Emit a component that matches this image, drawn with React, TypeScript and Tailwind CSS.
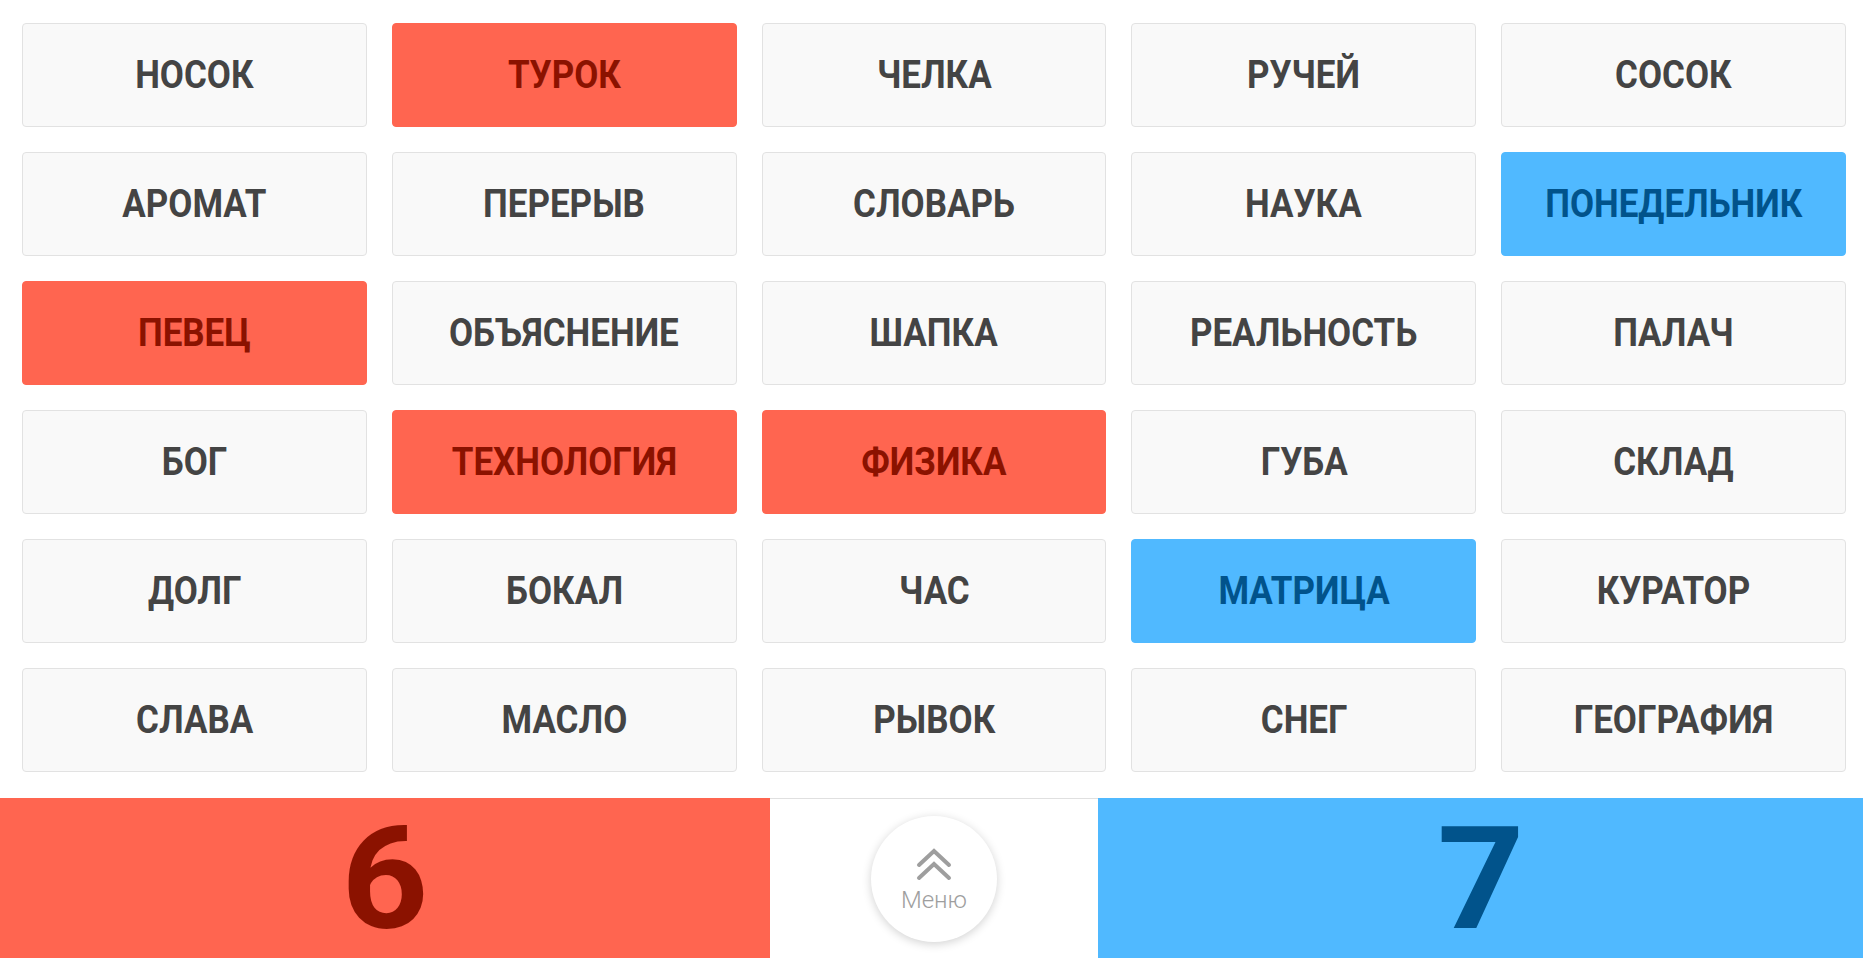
import { clsx } from "clsx";

type Tone = "red" | "blue" | undefined;

const rows: [string, Tone][][] = [
  [["НОСОК", undefined], ["ТУРОК", "red"], ["ЧЕЛКА", undefined], ["РУЧЕЙ", undefined], ["СОСОК", undefined]],
  [["АРОМАТ", undefined], ["ПЕРЕРЫВ", undefined], ["СЛОВАРЬ", undefined], ["НАУКА", undefined], ["ПОНЕДЕЛЬНИК", "blue"]],
  [["ПЕВЕЦ", "red"], ["ОБЪЯСНЕНИЕ", undefined], ["ШАПКА", undefined], ["РЕАЛЬНОСТЬ", undefined], ["ПАЛАЧ", undefined]],
  [["БОГ", undefined], ["ТЕХНОЛОГИЯ", "red"], ["ФИЗИКА", "red"], ["ГУБА", undefined], ["СКЛАД", undefined]],
  [["ДОЛГ", undefined], ["БОКАЛ", undefined], ["ЧАС", undefined], ["МАТРИЦА", "blue"], ["КУРАТОР", undefined]],
  [["СЛАВА", undefined], ["МАСЛО", undefined], ["РЫВОК", undefined], ["СНЕГ", undefined], ["ГЕОГРАФИЯ", undefined]],
];

/** одна карточка со словом */
function WordCard({ word, tone }: { word: string; tone?: Tone }) {
  return (
    <div
      className={clsx(
        "h-[104px] rounded-[4px] border flex items-center justify-center",
        tone === "red" && "bg-[#ff6550] border-[#ff6550] text-[#8b1200]",
        tone === "blue" && "bg-[#50b9ff] border-[#50b9ff] text-[#01538b]",
        !tone && "bg-[#f9f9f9] border-[#e2e2e2] text-[#444444]",
      )}
    >
      <span className="inline-block scale-x-[0.92] text-[38px] font-bold leading-none whitespace-nowrap">
        {word}
      </span>
    </div>
  );
}

function MenuButton() {
  return (
    <button className="w-[126px] h-[126px] rounded-full bg-white shadow-[0_2px_10px_rgba(0,0,0,0.18)] flex flex-col items-center justify-center">
      <svg width="36" height="34" viewBox="0 0 36 34" className="mt-[2px]">
        <polyline
          points="3,17 18,3 33,17"
          fill="none"
          stroke="#9e9e9e"
          strokeWidth="4"
          strokeLinecap="round"
        />
        <polyline
          points="3,30 18,16 33,30"
          fill="none"
          stroke="#9e9e9e"
          strokeWidth="4"
          strokeLinecap="round"
        />
      </svg>
      <span className="text-[24px] font-light leading-none text-[#9e9e9e] mt-[6px]">Меню</span>
    </button>
  );
}

export default function App() {
  return (
    <div className="w-[1863px] h-[959px] bg-white flex flex-col font-['Roboto','Noto_Sans',sans-serif] overflow-hidden">
      <div className="grid grid-cols-5 gap-x-[25px] gap-y-[25px] pl-[22px] pr-[17px] pt-[23px] pb-[26px]">
        {rows.flat().map(([word, tone]) => (
          <WordCard key={word} word={word} tone={tone} />
        ))}
      </div>

      <div className="flex h-[160px]">
        <div className="w-[770px] bg-[#ff6550] flex items-center justify-center">
          <span className="inline-block scale-x-[1.07] mt-[4px] text-[142px] font-bold leading-[1.1] text-[#8b1200]">6</span>
        </div>
        <div className="flex-1 border-t border-[#e0e0e0] flex items-center justify-center">
          <MenuButton />
        </div>
        <div className="w-[765px] bg-[#50b9ff] flex items-center justify-center">
          <span className="inline-block scale-x-[1.07] mt-[4px] text-[142px] font-bold leading-[1.1] text-[#01538b]">7</span>
        </div>
      </div>
    </div>
  );
}
